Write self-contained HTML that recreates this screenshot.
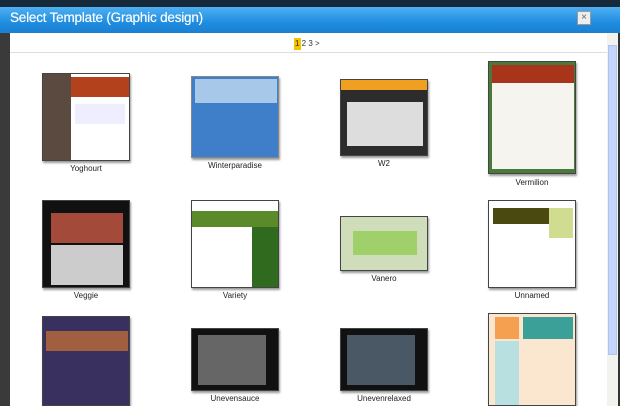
<!DOCTYPE html><html><head><style>
*{margin:0;padding:0;box-sizing:border-box}
body{width:620px;height:406px;overflow:hidden;background:#1d2a38;font-family:"Liberation Sans",sans-serif;position:relative}
.a{position:absolute}
.t{position:absolute;border:1px solid #444;box-shadow:1px 2px 2px #999;overflow:hidden}
.l{position:absolute;font-size:8px;color:#222;text-align:center;width:100px}
</style></head><body>
<div class="a" style="left:0;top:0;width:620px;height:8px;background:#15293b"></div>
<div class="a" style="left:0;top:7px;width:620px;height:26px;background:linear-gradient(#4fb0f2,#1f8de0 60%,#1a7fd0)"></div>
<div class="a" style="left:10px;top:10px;color:#fff;font-size:13.5px;letter-spacing:-0.2px;text-shadow:0 0 0.5px #fff">Select Template (Graphic design)</div>
<div class="a" style="left:577px;top:11px;width:14px;height:14px;background:#eee;border:1px solid #999;font-size:10px;color:#666;text-align:center;line-height:12px">×</div>
<div class="a" style="left:0;top:33px;width:10px;height:373px;background:#3a3a3a"></div>
<div class="a" style="left:10px;top:33px;width:598px;height:373px;background:#fff"></div>
<div class="a" style="left:10px;top:52px;width:598px;height:1px;background:#ddd"></div>
<div class="a" style="left:294px;top:38px;width:7px;height:12px;background:#f5c400"></div>
<div class="a" style="left:295px;top:39px;font-size:8px;color:#333">1 2 3 &gt;</div>
<div class="a" style="left:607px;top:33px;width:11px;height:373px;background:#f2f2ee"></div>
<div class="a" style="left:608px;top:45px;width:9px;height:310px;background:#c3d5fb;border:1px solid #b0c4ee"></div>
<div class="a" style="left:618px;top:33px;width:2px;height:373px;background:#333"></div>

<!-- row1 -->
<div class="t" style="left:42px;top:73px;width:88px;height:88px;background:#fff">
<div class="a" style="left:0;top:0;width:28px;height:88px;background:#5a4a40"></div>
<div class="a" style="left:28px;top:3px;width:60px;height:20px;background:#b3421c"></div>
<div class="a" style="left:32px;top:30px;width:50px;height:20px;background:#eef"></div></div>
<div class="l" style="left:36px;top:164px">Yoghourt</div>
<div class="t" style="left:191px;top:76px;width:88px;height:82px;background:#3f7fc9;border-color:#888">
<div class="a" style="left:3px;top:2px;width:82px;height:24px;background:#a8c8ea"></div></div>
<div class="l" style="left:185px;top:161px">Winterparadise</div>
<div class="t" style="left:340px;top:79px;width:88px;height:77px;background:#2c2c2c">
<div class="a" style="left:0;top:0;width:88px;height:10px;background:#f0a020"></div>
<div class="a" style="left:6px;top:22px;width:76px;height:44px;background:#ddd"></div></div>
<div class="l" style="left:334px;top:159px">W2</div>
<div class="t" style="left:488px;top:61px;width:88px;height:113px;background:#4a7a3a">
<div class="a" style="left:3px;top:3px;width:82px;height:18px;background:#a8341a"></div>
<div class="a" style="left:3px;top:21px;width:82px;height:86px;background:#f6f4ee"></div></div>
<div class="l" style="left:482px;top:178px">Vermilion</div>
<!-- row2 -->
<div class="t" style="left:42px;top:200px;width:88px;height:88px;background:#111">
<div class="a" style="left:8px;top:12px;width:72px;height:30px;background:#a34a3a"></div>
<div class="a" style="left:8px;top:44px;width:72px;height:40px;background:#ccc"></div></div>
<div class="l" style="left:36px;top:291px">Veggie</div>
<div class="t" style="left:191px;top:200px;width:88px;height:88px;background:#fff">
<div class="a" style="left:0;top:10px;width:88px;height:16px;background:#5a8a2a"></div>
<div class="a" style="left:60px;top:26px;width:28px;height:62px;background:#2f6a1f"></div></div>
<div class="l" style="left:185px;top:291px">Variety</div>
<div class="t" style="left:340px;top:216px;width:88px;height:55px;background:#d0ddba">
<div class="a" style="left:12px;top:14px;width:64px;height:24px;background:#9fd06a"></div></div>
<div class="l" style="left:334px;top:274px">Vanero</div>
<div class="t" style="left:488px;top:200px;width:88px;height:88px;background:#fff">
<div class="a" style="left:4px;top:7px;width:56px;height:16px;background:#4a4a10"></div>
<div class="a" style="left:60px;top:7px;width:24px;height:30px;background:#d0dc90"></div></div>
<div class="l" style="left:482px;top:291px">Unnamed</div>
<!-- row3 -->
<div class="t" style="left:42px;top:316px;width:88px;height:90px;background:#3a3060">
<div class="a" style="left:3px;top:14px;width:82px;height:20px;background:#a06040"></div></div>
<div class="t" style="left:191px;top:328px;width:88px;height:63px;background:#111">
<div class="a" style="left:6px;top:6px;width:68px;height:50px;background:#666"></div></div>
<div class="l" style="left:185px;top:394px">Unevensauce</div>
<div class="t" style="left:340px;top:328px;width:88px;height:63px;background:#111">
<div class="a" style="left:6px;top:6px;width:68px;height:50px;background:#4a5866"></div></div>
<div class="l" style="left:334px;top:394px">Unevenrelaxed</div>
<div class="t" style="left:488px;top:313px;width:88px;height:93px;background:#fbe6d0">
<div class="a" style="left:6px;top:3px;width:24px;height:22px;background:#f5a050"></div>
<div class="a" style="left:34px;top:3px;width:50px;height:22px;background:#3aa098"></div>
<div class="a" style="left:6px;top:27px;width:24px;height:66px;background:#b8e0e0"></div></div>
</body></html>
